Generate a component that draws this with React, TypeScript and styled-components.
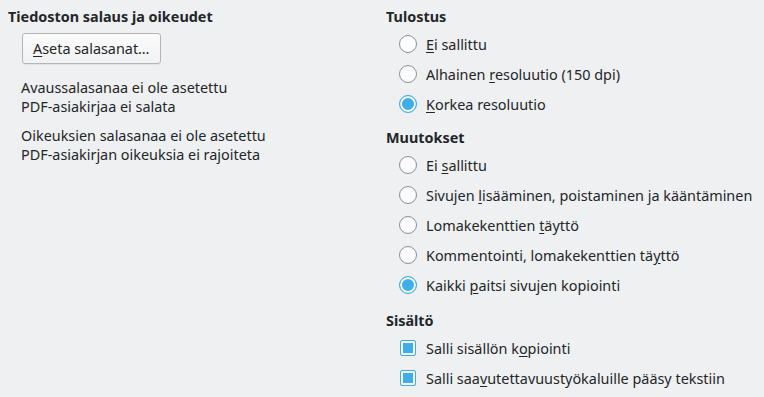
import React from 'react'
import styled, { createGlobalStyle } from 'styled-components'

const GlobalStyle = createGlobalStyle`
  html, body {
    margin: 0;
    padding: 0;
    background: #eff0f1;
  }
  body {
    font-family: "Noto Sans", "DejaVu Sans", sans-serif;
    font-size: 14.4px;
    color: #232629;
  }
`

const Page = styled.div`
  display: grid;
  grid-template-columns: 378px 1fr;
  padding: 7px 8px;
  width: 764px;
  height: 397px;
  box-sizing: border-box;
`

const Column = styled.div`
  display: flex;
  flex-direction: column;
`

const Heading = styled.div<{ $gap?: number }>`
  font-weight: bold;
  line-height: 20px;
  margin-top: ${(p) => p.$gap ?? 0}px;
  margin-bottom: 2px;
`

const Button = styled.button`
  align-self: flex-start;
  margin: 4px 0 0 14px;
  height: 31px;
  padding: 0 10px;
  font: inherit;
  color: inherit;
  border: 1px solid #b3b5b7;
  border-radius: 3px;
  background: linear-gradient(#fbfbfb, #f1f2f3);
  box-shadow: 0 1px 1px rgba(0, 0, 0, 0.06);
`

const Info = styled.p<{ $gap: number }>`
  margin: ${(p) => p.$gap}px 0 0 13px;
  line-height: 19px;
`

const Mn = styled.span`
  text-decoration: underline;
  text-underline-offset: 2px;
`

const Row = styled.label`
  display: flex;
  align-items: center;
  height: 30px;
  padding-left: 13px;
  gap: 9px;
`

const Radio = styled.span<{ $on?: boolean }>`
  width: 16px;
  height: 16px;
  border-radius: 50%;
  border: 1px solid ${(p) => (p.$on ? '#3daee9' : '#8d8f91')};
  background: ${(p) => (p.$on ? '#3daee9' : '#fcfcfc')};
  box-shadow: ${(p) => (p.$on ? 'inset 0 0 0 2px #fcfcfc' : 'none')};
  flex: none;
`

const Check = styled.span`
  width: 14px;
  height: 14px;
  margin-left: 1px;
  margin-right: 1px;
  border-radius: 2px;
  border: 1px solid #3daee9;
  background: #3daee9;
  box-shadow: inset 0 0 0 2px #fcfcfc;
  flex: none;
`

type Opt = { pre: string; key: string; post: string; on?: boolean }

const print: Opt[] = [
  { pre: '', key: 'E', post: 'i sallittu' },
  { pre: 'Alhainen ', key: 'r', post: 'esoluutio (150 dpi)' },
  { pre: '', key: 'K', post: 'orkea resoluutio', on: true },
]

const changes: Opt[] = [
  { pre: 'Ei ', key: 's', post: 'allittu' },
  { pre: 'Sivujen ', key: 'l', post: 'isääminen, poistaminen ja kääntäminen' },
  { pre: 'Lomakekenttien ', key: 't', post: 'äyttö' },
  { pre: 'Kommentointi, lomakekenttien tä', key: 'y', post: 'ttö' },
  { pre: 'Kaikki ', key: 'p', post: 'aitsi sivujen kopiointi', on: true },
]

const content: Opt[] = [
  { pre: 'Salli sisällön k', key: 'o', post: 'piointi' },
  { pre: 'Salli saa', key: 'v', post: 'utettavuustyökaluille pääsy tekstiin' },
]

function Label({ o }: { o: Opt }) {
  return (
    <span>
      {o.pre}
      <Mn>{o.key}</Mn>
      {o.post}
    </span>
  )
}

export default function App() {
  return (
    <>
      <GlobalStyle />
      <Page>
        <Column>
          <Heading>Tiedoston salaus ja oikeudet</Heading>
          <Button>
            <Mn>A</Mn>seta salasanat…
          </Button>
          <Info $gap={14}>
            Avaussalasanaa ei ole asetettu
            <br />
            PDF-asiakirjaa ei salata
          </Info>
          <Info $gap={10}>
            Oikeuksien salasanaa ei ole asetettu
            <br />
            PDF-asiakirjan oikeuksia ei rajoiteta
          </Info>
        </Column>
        <Column>
          <Heading>Tulostus</Heading>
          {print.map((o) => (
            <Row key={o.pre + o.key}>
              <Radio $on={o.on} />
              <Label o={o} />
            </Row>
          ))}
          <Heading $gap={9}>Muutokset</Heading>
          {changes.map((o) => (
            <Row key={o.pre + o.key}>
              <Radio $on={o.on} />
              <Label o={o} />
            </Row>
          ))}
          <Heading $gap={11}>Sisältö</Heading>
          {content.map((o) => (
            <Row key={o.pre + o.key}>
              <Check />
              <Label o={o} />
            </Row>
          ))}
        </Column>
      </Page>
    </>
  )
}
